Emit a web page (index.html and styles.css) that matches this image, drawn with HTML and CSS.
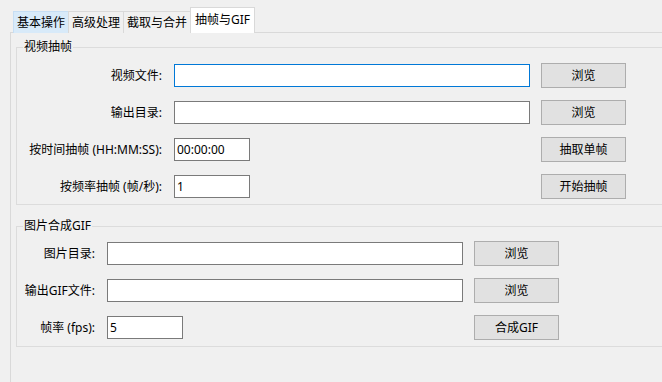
FILE: index.html
```html
<!DOCTYPE html>
<html lang="zh">
<head>
<meta charset="utf-8">
<title>抽帧与GIF</title>
<link rel="stylesheet" href="styles.css">
</head>
<body>
<div class="window">
  <div class="tabs">
    <div class="tab tab-hover">基本操作</div>
    <div class="tab">高级处理</div>
    <div class="tab">截取与合并</div>
    <div class="tab tab-active">抽帧与GIF</div>
  </div>
  <div class="panel">
    <div class="group group-video">
      <span class="group-title">视频抽帧</span>
      <div class="row-grid grid-video">
        <label class="lbl">视频文件:</label>
        <div class="input input-focus"></div>
        <div class="btn">浏览</div>

        <label class="lbl">输出目录:</label>
        <div class="input"></div>
        <div class="btn">浏览</div>

        <label class="lbl">按时间抽帧 (HH:MM:SS):</label>
        <div class="input input-short">00:00:00</div>
        <div class="btn">抽取单帧</div>

        <label class="lbl">按频率抽帧 (帧/秒):</label>
        <div class="input input-short">1</div>
        <div class="btn">开始抽帧</div>
      </div>
    </div>
    <div class="group group-gif">
      <span class="group-title">图片合成GIF</span>
      <div class="row-grid grid-gif">
        <label class="lbl">图片目录:</label>
        <div class="input"></div>
        <div class="btn">浏览</div>

        <label class="lbl">输出GIF文件:</label>
        <div class="input"></div>
        <div class="btn">浏览</div>

        <label class="lbl">帧率 (fps):</label>
        <div class="input input-short">5</div>
        <div class="btn">合成GIF</div>
      </div>
    </div>
  </div>
</div>
</body>
</html>
```

FILE: styles.css
```css
html, body {
  margin: 0;
  padding: 0;
  background: #f0f0f0;
  overflow: hidden;
}
body {
  width: 662px;
  height: 382px;
  font-family: "Noto Sans", "Noto Sans CJK SC", sans-serif;
  font-size: 12px;
  color: #000;
}
.window {
  padding: 8px 0 0 10px;
  height: 382px;
  box-sizing: border-box;
  display: flex;
  flex-direction: column;
}
.tabs {
  display: flex;
  align-items: flex-end;
  height: 25px;
  margin-left: 3px;
  position: relative;
  z-index: 2;
  margin-bottom: -1px;
}
.tab {
  height: 21px;
  line-height: 21px;
  padding: 0 3px;
  border: 1px solid #d9d9d9;
  border-bottom: none;
  background: #f0f0f0;
  margin-left: -1px;
  white-space: nowrap;
}
.tab:first-child {
  margin-left: 0;
}
.tab-hover {
  background: #d8eaf9;
  border-color: #c6def4;
}
.tab-active {
  background: #fff;
  height: 25px;
  line-height: 24px;
  padding: 0 4px;
}
.panel {
  flex: 1;
  border-top: 1px solid #d9d9d9;
  border-left: 1px solid #d9d9d9;
  padding: 14px 0 0 5px;
}
.group {
  position: relative;
  border: 1px solid #dcdcdc;
  border-right: none;
}
.group-video {
  padding: 15px 0 5px 0;
}
.group-gif {
  margin-top: 21px;
  padding: 14px 0 6px 0;
}
.group-title {
  position: absolute;
  top: -8px;
  left: 6px;
  height: 14px;
  line-height: 14px;
  padding: 0 1px;
  background: #f0f0f0;
}
.row-grid {
  display: grid;
  grid-auto-rows: 25px;
  row-gap: 12px;
  column-gap: 11px;
  align-items: center;
}
.grid-video {
  grid-template-columns: 146px 356px 85px;
}
.grid-gif {
  grid-template-columns: 79px 356px 85px;
}
.lbl {
  text-align: right;
  padding-right: 1px;
  white-space: nowrap;
  line-height: 16px;
}
.input {
  height: 23px;
  box-sizing: border-box;
  border: 1px solid #7a7a7a;
  background: #fff;
  padding-left: 2px;
  line-height: 21px;
  white-space: nowrap;
}
.input-focus {
  border-color: #0078d7;
}
.input-short {
  width: 76px;
}
.btn {
  height: 25px;
  box-sizing: border-box;
  border: 1px solid #adadad;
  background: #e1e1e1;
  text-align: center;
  line-height: 23px;
  white-space: nowrap;
}
```
